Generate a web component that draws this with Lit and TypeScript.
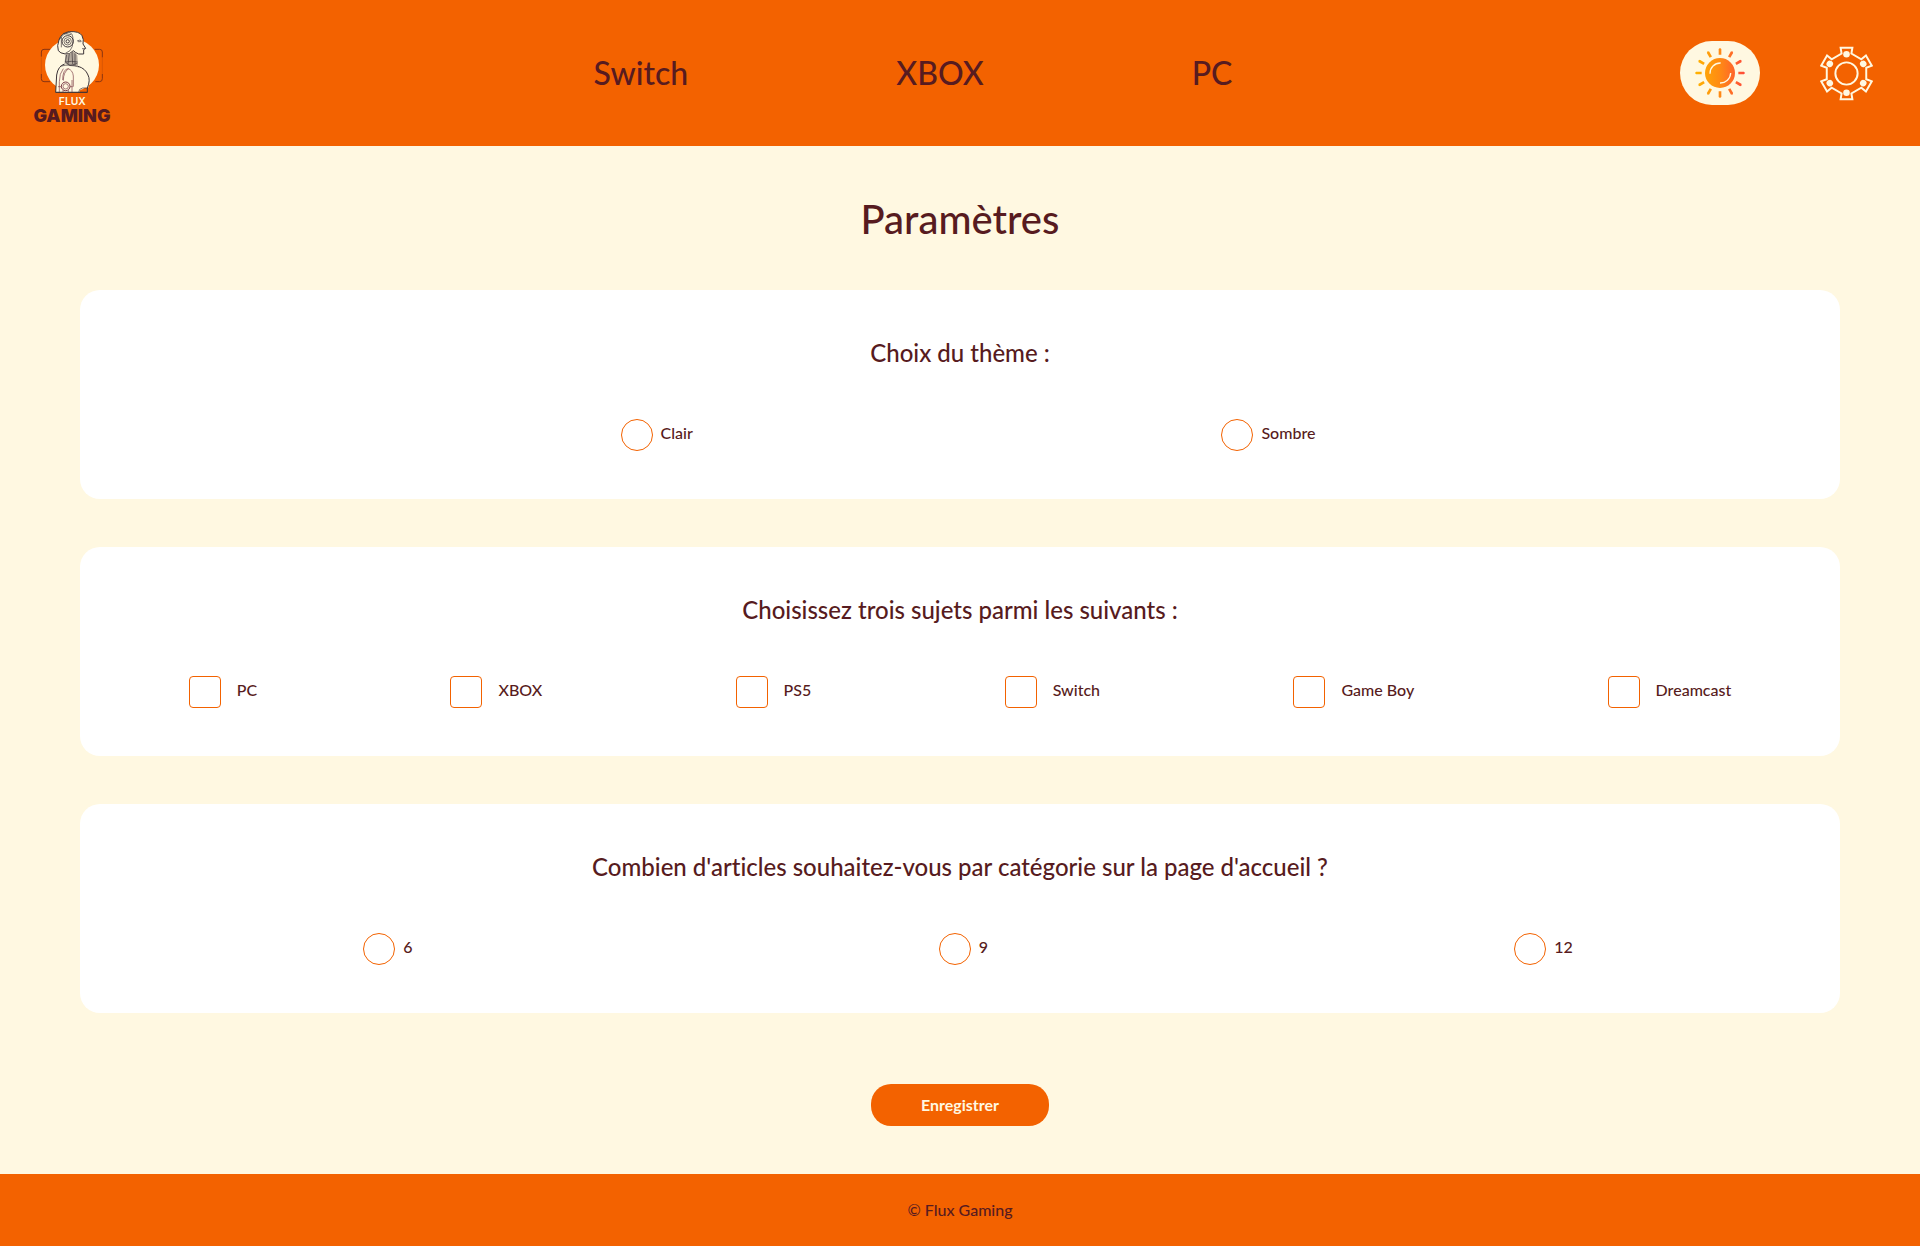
import { LitElement, html, css, svg } from "lit";
import { customElement } from "lit/decorators.js";

const NAV = ["Switch", "XBOX", "PC"];
const THEMES = ["Clair", "Sombre"];
const SUBJECTS = ["PC", "XBOX", "PS5", "Switch", "Game Boy", "Dreamcast"];
const COUNTS = ["6", "9", "12"];

/** Robot bust in front of a disc, with the brand name below. */
const logo = html`
  <svg class="logo-art" viewBox="36 39 360 360" role="img" aria-label="Flux Gaming">
    <g fill="none" stroke="#8a3512" stroke-width="3">
      <path d="M124 170V156Q124 148 132 148H152M284 148H299Q307 148 307 156V172M124 222V236Q124 245 132 245H150M286 245H299Q307 245 307 236V222" />
      <path d="M124 172V222M307 172V222" stroke-width="1" stroke-opacity=".7" />
    </g>
    <ellipse cx="216" cy="195" rx="81" ry="79" fill="#fff8e1" />
    <path d="M196 158L194 190Q174 198 170 225L167 277H238Q240 266 248 263H265Q270 240 264 225Q256 205 234 199L233 165Z" fill="#fff8e1" />
    <path d="M208 95Q238 93 246 107Q252 118 249 132L257 145L251 149V162H236Q226 158 220 152Q210 164 196 162Q180 160 175 152Q170 138 177 120Q184 98 208 95Z" fill="#fff8e1" stroke="#3d3438" stroke-width="3" stroke-linejoin="round" />
    <path d="M194 192Q174 198 170 225L167 277H262V264Q272 240 264 225Q256 205 234 199" fill="none" stroke="#3d3438" stroke-width="3" />
    <path d="M196 162L194 190Q212 204 234 198L232 166L220 154Q210 164 196 162Z" fill="#b3a99d" />
    <g fill="none" stroke="#3d3438" stroke-width="2">
      <path d="M178 118Q190 100 206 97Q220 98 219 122Q219 142 210 152L196 160M184 110V142M190 100L214 104" />
      <circle cx="203" cy="124" r="17" stroke-width="3" />
      <circle cx="203" cy="124" r="11" />
      <circle cx="203" cy="124" r="5" stroke-width="3" />
      <path d="M231 123L240 120L245 124M234 125H243M246 146H256" />
      <path d="M200 164L196 186L210 197L232 190M208 160L204 192M216 156L218 192M225 160V196M196 186Q214 182 233 186" />
      <path d="M181 199Q210 190 236 201M264 264H248Q236 266 236 277M167 277H262" />
    </g>
    <g fill="none" stroke="#7b3c45" stroke-width="2">
      <path d="M190 206Q178 220 178 245V276M188 240Q188 208 204 206Q218 210 220 228V260M206 206Q190 216 190 242M216 240V276" />
      <circle cx="197" cy="259" r="13" stroke-width="3" />
      <circle cx="197" cy="259" r="8" />
      <path d="M174 260H184M210 260H218M189 270V277M205 270V277" />
    </g>
    <text class="logo-top" x="217" y="316" text-anchor="middle">FLUX</text>
    <text class="logo-name" x="216" y="365" text-anchor="middle">GAMING</text>
  </svg>
`;

const RAYS = Array.from({ length: 12 }, (_, i) => i * 30);
const sun = html`
  <svg class="sun" viewBox="-75 -75 150 150" aria-hidden="true">
    <defs>
      <linearGradient id="sun-fill" gradientUnits="userSpaceOnUse" x1="-75" y1="0" x2="75" y2="0">
        <stop offset="0" stop-color="#ffb400" />
        <stop offset="0.5" stop-color="#ff8a14" />
        <stop offset="1" stop-color="#ff4a3a" />
      </linearGradient>
    </defs>
    <path
      fill="url(#sun-fill)"
      d=${RAYS.map((a) => {
        const r = (a * Math.PI) / 180;
        const c = Math.cos(r);
        const s = Math.sin(r);
        const p = (d: number, w: number) => `${(d * c - w * s).toFixed(2)} ${(d * s + w * c).toFixed(2)}`;
        return `M${p(55, -4)}L${p(72, -4)}L${p(75, 0)}L${p(72, 4)}L${p(55, 4)}Z`;
      }).join("")}
    />
    <circle r="45" fill="url(#sun-fill)" />
    <path d="M-30 2A31 31 0 0 1 2 -30M32 0A31 31 0 0 1 0 30" fill="none" stroke="#fff8e1" stroke-width="4" />
  </svg>
`;

const TEETH = [0, 60, 120, 180, 240, 300];
const turn = (x: number, y: number, deg: number) => {
  const r = (deg * Math.PI) / 180;
  return `${(x * Math.cos(r) - y * Math.sin(r)).toFixed(2)},${(x * Math.sin(r) + y * Math.cos(r)).toFixed(2)}`;
};
const gear = html`
  <svg class="gear" viewBox="-81 -84 162 168" aria-hidden="true">
    <polygon
      points=${TEETH.map((a) => [turn(-15, -61, a), turn(-18, -79, a), turn(18, -79, a), turn(15, -61, a)].join(" ")).join(" ")}
      fill="none" stroke="#fff8e1" stroke-width="6"
    />
    <circle r="34" fill="none" stroke="#fff8e1" stroke-width="6" />
    ${TEETH.map((a) => svg`<circle cy="-59" r="10" fill="#fff8e1" transform="rotate(${a})" />`)}
  </svg>
`;

@customElement("app-root")
export class AppRoot extends LitElement {
  static styles = css`
    :host {
      --orange: #f36200;
      --cream: #fff8e1;
      --wine: #571b20;
      display: flex;
      flex-direction: column;
      min-height: 100vh;
      background: var(--cream);
      color: var(--wine);
      font: 500 16px/20px Lato, "Open Sans", sans-serif;
      font-variant-ligatures: none;
    }
    * { box-sizing: border-box; }
    .header {
      display: flex;
      align-items: center;
      justify-content: space-between;
      background: var(--orange);
      padding-right: 47px;
    }
    .logo { display: block; padding: 13px 14px 13px 12px; }
    .logo-art { display: block; width: 120px; height: 120px; }
    .logo-top { font: 600 31px Inter, sans-serif; fill: var(--cream); }
    .logo-name { font: 900 54px Inter, sans-serif; fill: var(--wine); }
    .nav { display: flex; gap: 208px; }
    .nav-link { color: inherit; text-decoration: none; font-size: 32px; line-height: 40px; }
    .tools { display: flex; align-items: center; gap: 60px; }
    .toggle {
      display: flex;
      align-items: center;
      justify-content: center;
      width: 80px;
      height: 64px;
      padding: 0;
      border: 0;
      border-radius: 32px;
      background: var(--cream);
    }
    .sun { width: 50px; height: 50px; }
    .gear-link { display: block; }
    .gear { display: block; width: 53px; height: 55px; }
    .main { flex: 1; padding: 48px 80px; }
    .form { display: flex; flex-direction: column; gap: 48px; }
    .title { margin: 0 0 46px; text-align: center; font-size: 40px; line-height: 50px; font-weight: 500; }
    .card {
      display: flex;
      flex-direction: column;
      gap: 52px;
      padding: 48px 12px;
      border-radius: 20px;
      background: #fff;
    }
    .question { margin: 0; text-align: center; font-size: 24px; line-height: 29px; font-weight: 500; }
    .options { display: flex; justify-content: space-around; }
    .options.pair { justify-content: space-evenly; }
    .option { display: flex; align-items: center; gap: 16px; }
    .option.radio { gap: 8px; margin-left: 16px; }
    .option-text { padding-bottom: 4px; }
    .box {
      appearance: none;
      width: 32px;
      height: 32px;
      margin: 0;
      border: 1px solid var(--orange);
      border-radius: 4px;
      background: #fff;
    }
    .radio .box { border-radius: 50%; }
    .box:checked { background: var(--orange); box-shadow: inset 0 0 0 5px #fff; }
    .save {
      align-self: center;
      margin-top: 23px;
      padding: 11px 50px;
      border: 0;
      border-radius: 20px;
      background: var(--orange);
      color: var(--cream);
      font: 700 16px/20px Lato, "Open Sans", sans-serif;
    }
    .footer { padding: 26px; text-align: center; background: var(--orange); }
  `;

  private option(type: "radio" | "checkbox", name: string, text: string) {
    const id = `${name}-${text.toLowerCase().replace(/\s/g, "-")}`;
    return html`
      <div class="option ${type}">
        <input class="box" type=${type} id=${id} name=${name} value=${text} />
        <label class="option-text" for=${id}>${text}</label>
      </div>
    `;
  }

  private card(id: string, question: string, type: "radio" | "checkbox", items: string[]) {
    return html`
      <section class="card" role="group" aria-labelledby="${id}-title">
        <h2 class="question" id="${id}-title">${question}</h2>
        <div class="options ${items.length === 2 ? "pair" : ""}">
          ${items.map((item) => this.option(type, id, item))}
        </div>
      </section>
    `;
  }

  render() {
    return html`
      <header class="header">
        <a class="logo" href="#">${logo}</a>
        <nav class="nav">${NAV.map((item) => html`<a class="nav-link" href="#">${item}</a>`)}</nav>
        <div class="tools">
          <button class="toggle" type="button" aria-label="Thème">${sun}</button>
          <a class="gear-link" href="#" aria-label="Paramètres">${gear}</a>
        </div>
      </header>
      <main class="main">
        <h1 class="title">Paramètres</h1>
        <form class="form" @submit=${(e: Event) => e.preventDefault()}>
          ${this.card("theme", "Choix du thème :", "radio", THEMES)}
          ${this.card("sujets", "Choisissez trois sujets parmi les suivants :", "checkbox", SUBJECTS)}
          ${this.card("articles", "Combien d'articles souhaitez-vous par catégorie sur la page d'accueil ?", "radio", COUNTS)}
          <button class="save" type="submit">Enregistrer</button>
        </form>
      </main>
      <footer class="footer">© Flux Gaming</footer>
    `;
  }
}
